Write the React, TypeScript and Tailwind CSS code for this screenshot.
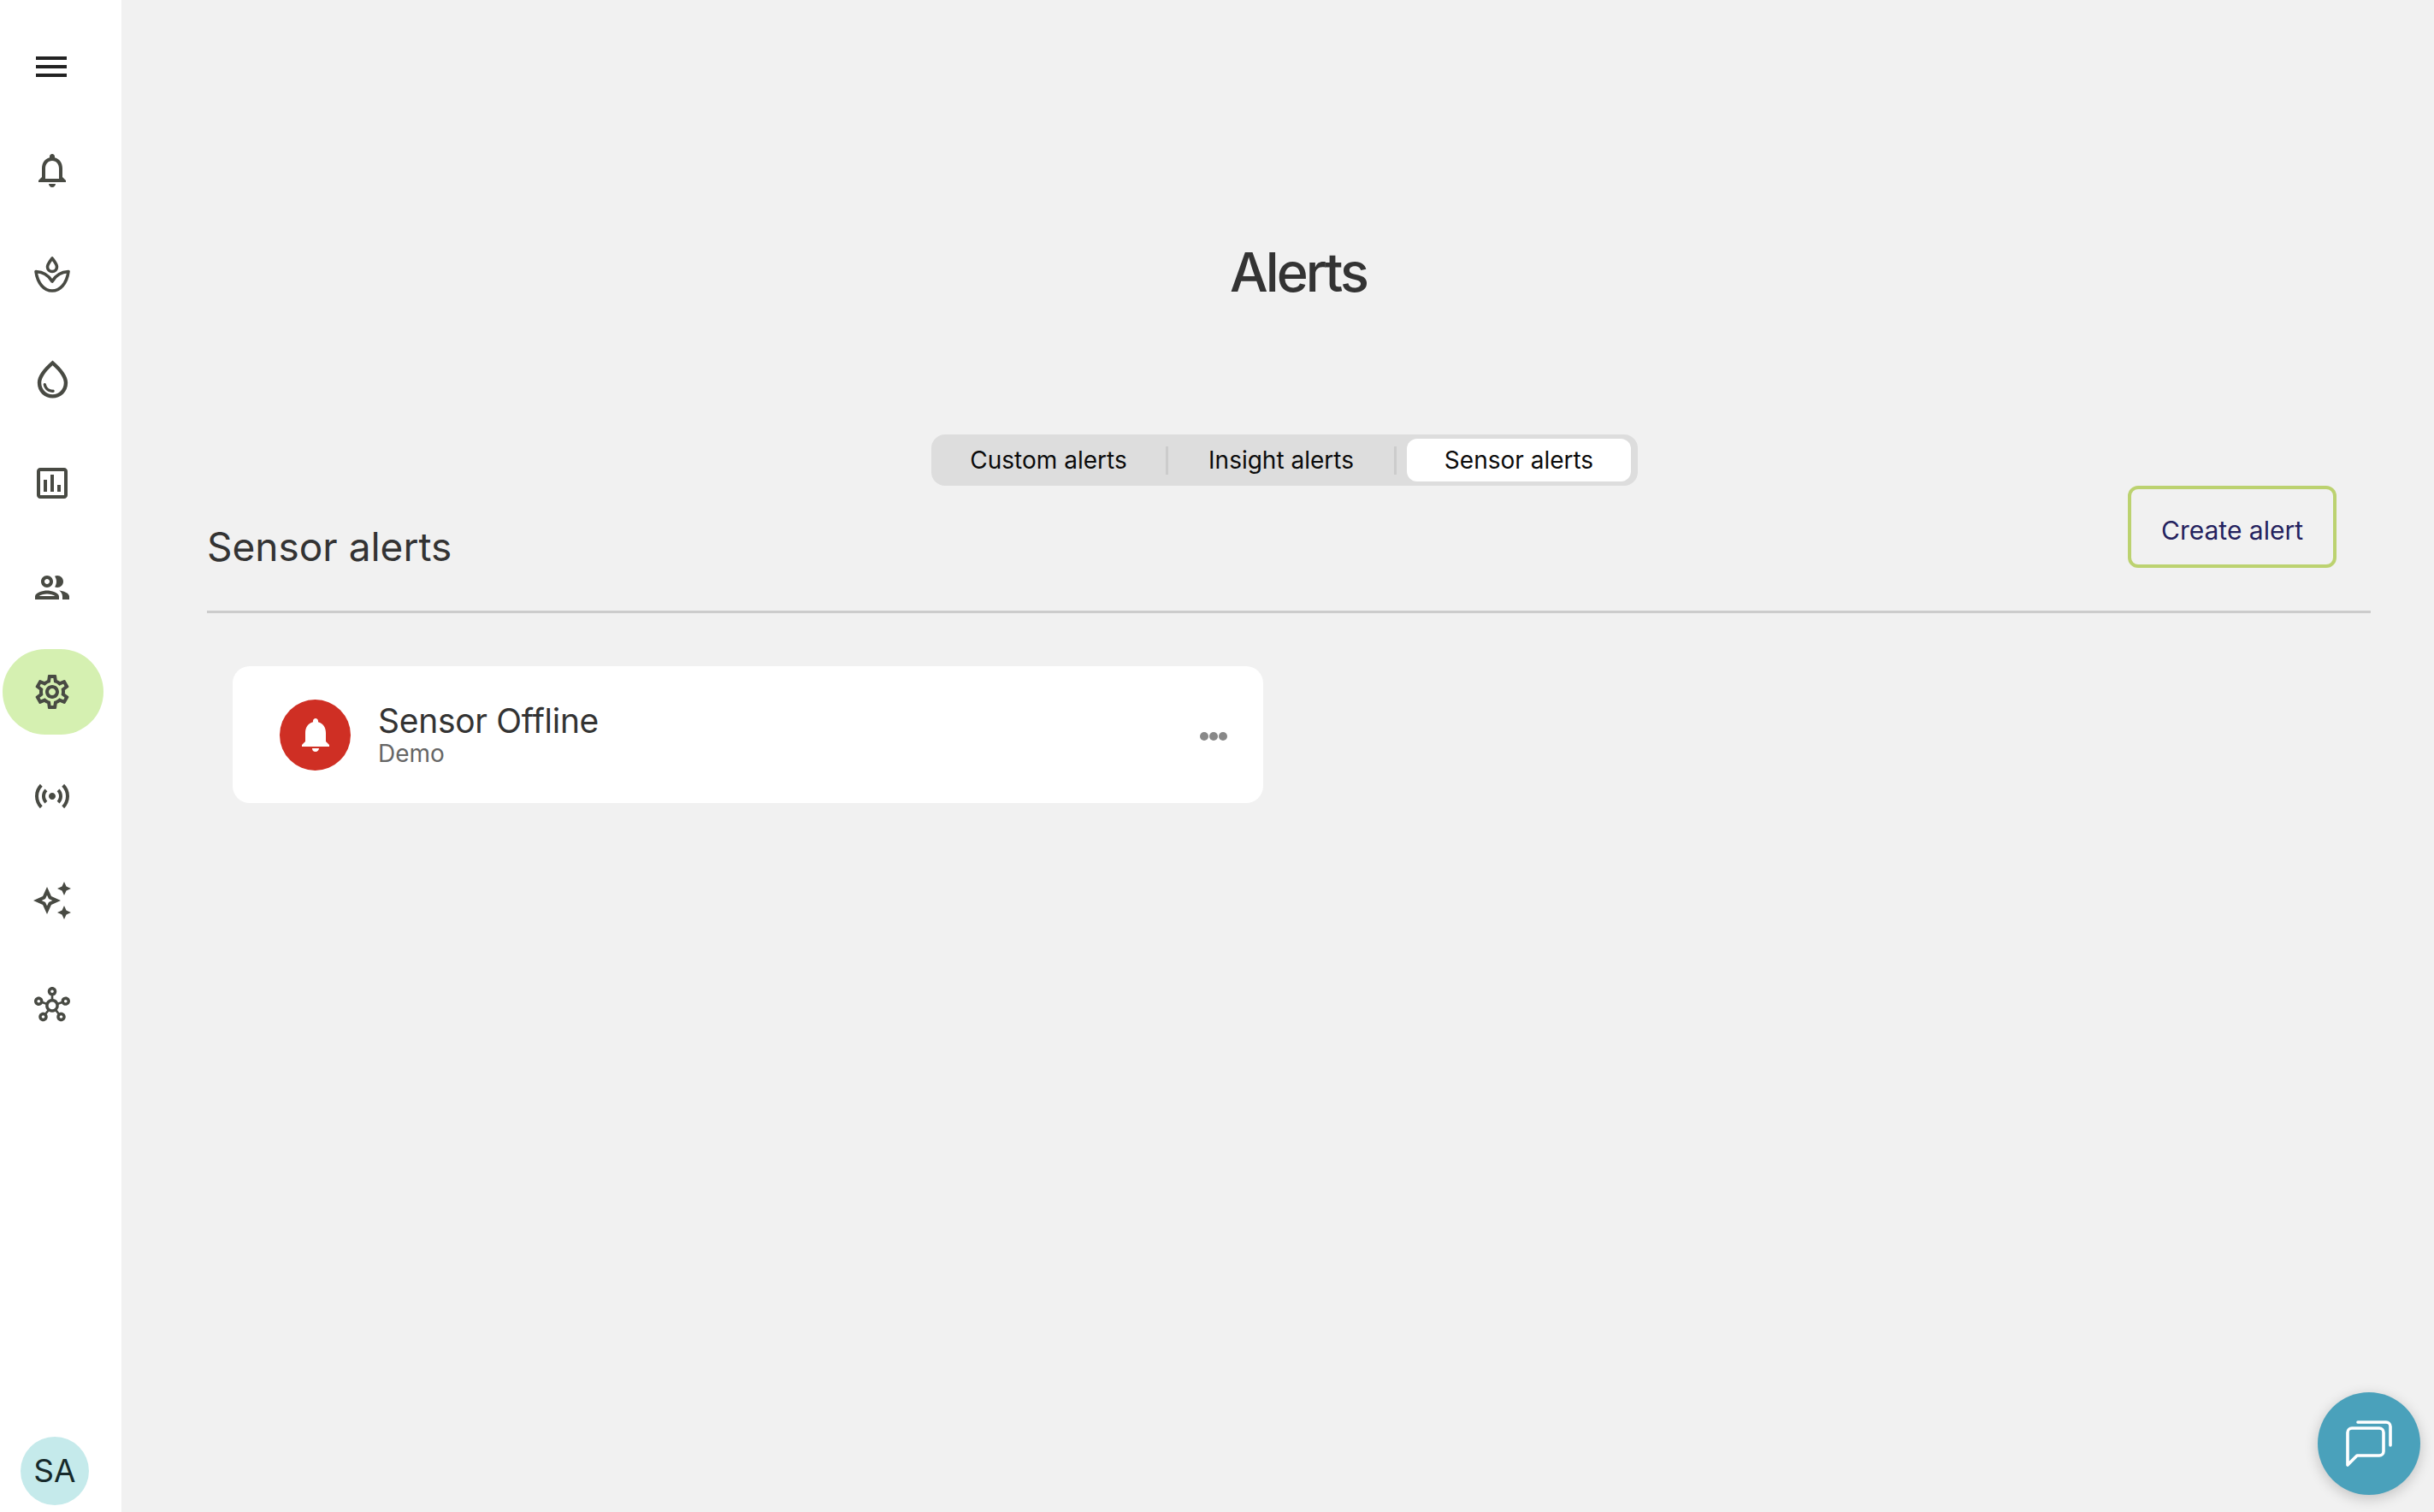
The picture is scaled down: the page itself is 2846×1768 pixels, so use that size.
import { ReactNode } from 'react'
import {
  MdMenu,
  MdNotifications,
  MdOutlineAssessment,
  MdOutlineAutoAwesome,
  MdOutlineGroup,
  MdOutlineHub,
  MdOutlineNotifications,
  MdOutlineSensors,
  MdOutlineSettings,
  MdOutlineWaterDrop,
} from 'react-icons/md'

function PlantIcon() {
  return (
    <svg width="42" height="42" viewBox="0 0 42 42" fill="none" stroke="currentColor" strokeWidth="3.6" strokeLinejoin="round">
      <path d="M21 2 C18 6 15.5 9 15.5 12 a5.5 5.5 0 0 0 11 0 C26.5 9 24 6 21 2Z" />
      <path d="M2 17.5 C4 32 12 40 21 40 C30 40 38 32 40 17.5 C31 18 25 22 21 29 C17 22 11 18 2 17.5Z" />
    </svg>
  )
}

function ChatIcon() {
  return (
    <svg width="54" height="54" viewBox="0 0 54 54" fill="none" stroke="white" strokeWidth="3.6" strokeLinecap="round" strokeLinejoin="round">
      <path d="M14 2 H47 a5 5 0 0 1 5 5 V29" />
      <path d="M2 52 V14 a5 5 0 0 1 5-5 H39 a5 5 0 0 1 5 5 V36 a5 5 0 0 1-5 5 H13 Z" />
    </svg>
  )
}

const NAV_ITEMS: { icon: ReactNode; active?: boolean }[] = [
  { icon: <MdOutlineNotifications size={48} /> },
  { icon: <PlantIcon /> },
  { icon: <MdOutlineWaterDrop size={53} /> },
  { icon: <MdOutlineAssessment size={48} /> },
  { icon: <MdOutlineGroup size={48} /> },
  { icon: <MdOutlineSettings size={48} />, active: true },
  { icon: <MdOutlineSensors size={48} /> },
  { icon: <MdOutlineAutoAwesome size={48} /> },
  { icon: <MdOutlineHub size={42} /> },
]

function Sidebar() {
  return (
    <aside className="flex w-[142px] shrink-0 flex-col bg-white pt-[54px] pb-[8px]">
      <div className="ml-[36px] mb-[47px] text-[#222222]">
        <MdMenu size={48} />
      </div>
      <nav className="flex flex-col gap-[22px]">
        {NAV_ITEMS.map((item, i) => (
          <div
            key={i}
            className={`ml-[3px] flex h-[100px] w-[118px] items-center justify-center rounded-[50px] pr-[2px] text-[#484a43] ${item.active ? 'bg-[#d5f0b1]' : ''}`}
          >
            {item.icon}
          </div>
        ))}
      </nav>
      <div className="mt-auto ml-[24px] flex h-[80px] w-[80px] items-center justify-center rounded-full bg-[#c5eaeb] text-[37px] text-[#172a2b]">
        SA
      </div>
    </aside>
  )
}

function Tabs() {
  return (
    <div className="flex justify-center pr-[10px]">
      <div className="flex h-[60px] w-[826px] items-center rounded-[16px] bg-[#dddddd] pr-[8px] text-[28px] text-[#0b0b0b]">
        <div className="flex w-[274px] justify-center">Custom alerts</div>
        <div className="h-[33px] w-[3px] bg-[#cccccc]" />
        <div className="flex w-[264px] justify-center">Insight alerts</div>
        <div className="h-[33px] w-[3px] bg-[#cccccc]" />
        <div className="ml-[12px] flex h-[50px] w-[262px] items-center justify-center rounded-[12px] bg-white">Sensor alerts</div>
      </div>
    </div>
  )
}

export default function App() {
  return (
    <div className="relative flex h-[1768px] overflow-hidden bg-[#f1f1f1] font-['Inter',sans-serif]">
      <Sidebar />
      <main className="flex-1 pl-[100px] pr-[74px] pt-[272px]">
        <h1 className="h-[92px] pl-[22px] text-center text-[63px] font-medium leading-[92px] tracking-[-3px] text-[#333333]">Alerts</h1>
        <div className="mt-[144px]">
          <Tabs />
        </div>
        <div className="flex h-[149px] items-start justify-between border-b-[3px] border-[#cccccc] pr-[40px]">
          <h2 className="mt-[46px] text-[46px] leading-[50px] text-[#333333]">Sensor alerts</h2>
          <button className="flex h-[96px] w-[244px] items-center justify-center rounded-[12px] border-[4px] border-[#bcd270] pt-[8px] text-[30px] text-[#24225e]">
            Create alert
          </button>
        </div>
        <div className="mt-[62px] ml-[30px] flex h-[160px] w-[1205px] items-center rounded-[20px] bg-white pl-[55px] pr-[42px]">
          <div className="flex h-[83px] w-[83px] items-center justify-center rounded-full bg-[#cf2f24] text-white">
            <MdNotifications size={48} />
          </div>
          <div className="ml-[32px]">
            <div className="text-[39px] leading-[44px] tracking-[-0.3px] text-[#333333]">Sensor Offline</div>
            <div className="text-[28px] leading-[32px] text-[#666666]">Demo</div>
          </div>
          <div className="ml-auto flex gap-[1px] pt-[3px]">
            <span className="h-[10px] w-[10px] rounded-full bg-[#888888]" />
            <span className="h-[10px] w-[10px] rounded-full bg-[#888888]" />
            <span className="h-[10px] w-[10px] rounded-full bg-[#888888]" />
          </div>
        </div>
      </main>
      <button className="absolute left-[2710px] top-[1628px] flex h-[120px] w-[120px] items-center justify-center rounded-full bg-[#4aa1bb] shadow-[0_4px_16px_rgba(0,0,0,0.2)]">
        <ChatIcon />
      </button>
    </div>
  )
}
